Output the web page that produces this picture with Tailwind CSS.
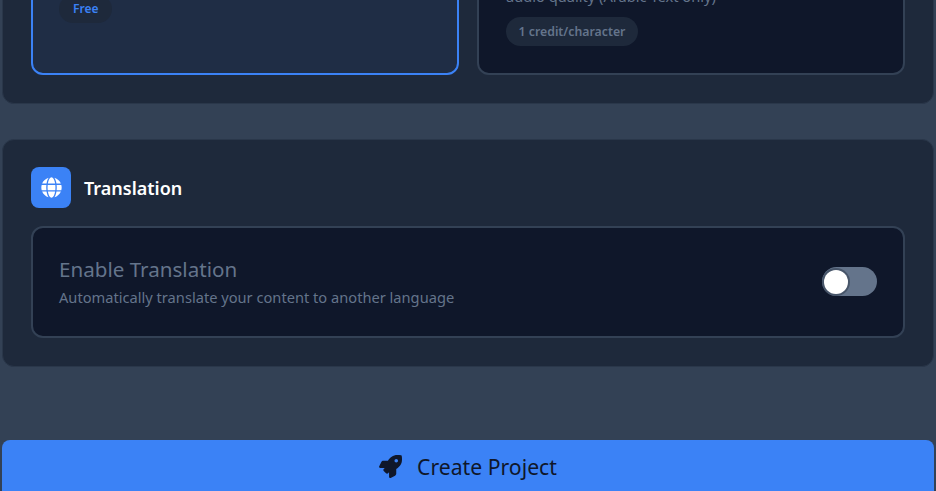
<!DOCTYPE html>
<html lang="en">
<head>
  <meta charset="UTF-8" />
  <meta name="viewport" content="width=device-width, initial-scale=1.0" />
  <title>Create Project</title>
  <script src="https://cdn.jsdelivr.net/npm/@tailwindcss/browser@4"></script>
</head>
<body class="bg-[#334155] font-['Noto_Sans',sans-serif]">
  <div class="h-[491px] overflow-hidden px-[2px]">

    <!-- Voice model section, scrolled mostly out of view -->
    <section class="-mt-[120px] h-[224px] bg-[#1e293b] border border-[#2a374a] rounded-xl pl-[28px] pr-[28px] pt-[20px]">
      <div class="grid grid-cols-2 gap-[18px] h-[174px]">
        <div class="bg-[#1f2d45] border-2 border-[#3b82f6] rounded-xl pl-[26px] pb-[50px] flex flex-col justify-end items-start">
          <div class="text-[#64748b] text-[20.6px]">Standard</div>
          <div class="text-[#64748b] text-[14.65px] leading-[22px]">Good audio quality</div>
          <span class="mt-[10px] bg-[#1e293b] text-[#3b82f6] text-[12px] leading-[16px] font-semibold rounded-full px-[14px] py-[6px]">Free</span>
        </div>
        <div class="bg-[#0f172a] border-2 border-[#334155] rounded-xl pl-[27px] pb-[27px] flex flex-col justify-end items-start">
          <div class="text-[#64748b] text-[20.6px]">Premium</div>
          <div class="text-[#64748b] text-[14.65px] leading-[22px]">audio quality (Arabic Text only)</div>
          <span class="mt-[10px] bg-[#1e293b] text-[#64748b] text-[12.3px] leading-[17px] font-semibold rounded-full px-[12.5px] py-[6px]">1 credit/character</span>
        </div>
      </div>
    </section>

    <!-- Translation -->
    <section class="mt-[35px] h-[228px] bg-[#1e293b] border border-[#2a374a] rounded-xl px-[28px] pt-[27px]">
      <div class="flex items-center gap-[13px]">
        <div class="w-[40px] h-[41px] bg-[#3b82f6] rounded-lg flex items-center justify-center">
          <svg class="w-[21px] h-[21px] text-white" viewBox="0 0 496 512" fill="currentColor">
            <path d="M336.5 160C322 70.7 287.8 8 248 8s-74 62.7-88.5 152h177zM152 256c0 22.2 1.2 43.5 3.3 64h185.3c2.1-20.5 3.3-41.8 3.3-64s-1.2-43.5-3.3-64H155.3c-2.1 20.5-3.3 41.8-3.3 64zm324.7-96c-28.6-67.9-86.5-120.4-158-141.6 24.4 33.8 41.2 84.7 50 141.6h108zM177.2 18.4C105.8 39.6 47.8 92.1 19.3 160h108c8.7-56.9 25.5-107.8 49.9-141.6zM487.4 192H372.7c2.1 21 3.3 42.5 3.3 64s-1.2 43-3.3 64h114.6c5.5-20.5 8.6-41.8 8.6-64s-3.1-43.5-8.5-64zM120 256c0-21.5 1.2-43 3.3-64H8.6C3.2 212.5 0 233.8 0 256s3.2 43.5 8.6 64h114.6c-2-21-3.2-42.5-3.2-64zm39.5 96c14.5 89.3 48.7 152 88.5 152s74-62.7 88.5-152h-177zm159.3 141.6c71.4-21.2 129.4-73.7 158-141.6h-108c-8.8 56.9-25.6 107.8-50 141.6zM19.3 352c28.6 67.9 86.5 120.4 158 141.6-24.4-33.8-41.2-84.7-50-141.6h-108z" />
          </svg>
        </div>
        <h2 class="text-white text-[18px] font-semibold pt-[2px]">Translation</h2>
      </div>

      <div class="mt-[18px] h-[112px] bg-[#0f172a] border-2 border-[#334155] rounded-xl pl-[26px] pr-[26px] flex items-center justify-between">
        <div class="-mt-[2px]">
          <div class="text-[#64748b] text-[20.6px] leading-[28px]">Enable Translation</div>
          <div class="text-[#64748b] text-[14.65px] leading-[22px] mt-[3px]">Automatically translate your content to another language</div>
        </div>
        <!-- toggle -->
        <div class="w-[55px] h-[29px] -mt-[1px] bg-[#64748b] rounded-full flex items-center pl-[2px]">
          <div class="w-[24px] h-[24px] bg-white rounded-full shadow-[0_0_0_2px_#475569]"></div>
        </div>
      </div>
    </section>

    <button class="mt-[73px] w-full h-[60px] bg-[#3b82f6] text-[#0f172a] rounded-lg flex items-start justify-center gap-[15px] pt-[11px] text-[21.2px]">
      <svg class="w-[23px] h-[23px] mt-[4px]" viewBox="0 0 512 512" fill="currentColor">
        <path d="M505.12019,19.09375c-1.18945-5.53125-6.65819-11-12.207-12.1875C460.716,0,435.507,0,410.40747,0,307.17523,0,245.26909,55.20312,199.05238,128H94.83772c-16.34763.01562-35.55658,11.875-42.88664,26.48438L2.51562,253.29688A28.4,28.4,0,0,0,0,264a24.00867,24.00867,0,0,0,24.00582,24H127.81618l-22.47457,22.46875c-11.36521,11.36133-12.99607,32.25781,0,45.25L156.24582,406.625c11.15623,11.1875,32.15619,13.15625,45.27726,0l22.47457-22.46875V488a24.00867,24.00867,0,0,0,24.00581,24,28.55934,28.55934,0,0,0,10.707-2.51562l98.72834-49.39063c14.62888-7.29687,26.50776-26.5,26.50776-42.85937V312.79688c72.59753-46.3125,128.03493-108.40626,128.03493-211.09376C512.07526,76.5,512.07526,51.29688,505.12019,19.09375ZM384.04033,168A40,40,0,1,1,424.05,128,40.02322,40.02322,0,0,1,384.04033,168Z" />
      </svg>
      Create Project
    </button>
  </div>
</body>
</html>
